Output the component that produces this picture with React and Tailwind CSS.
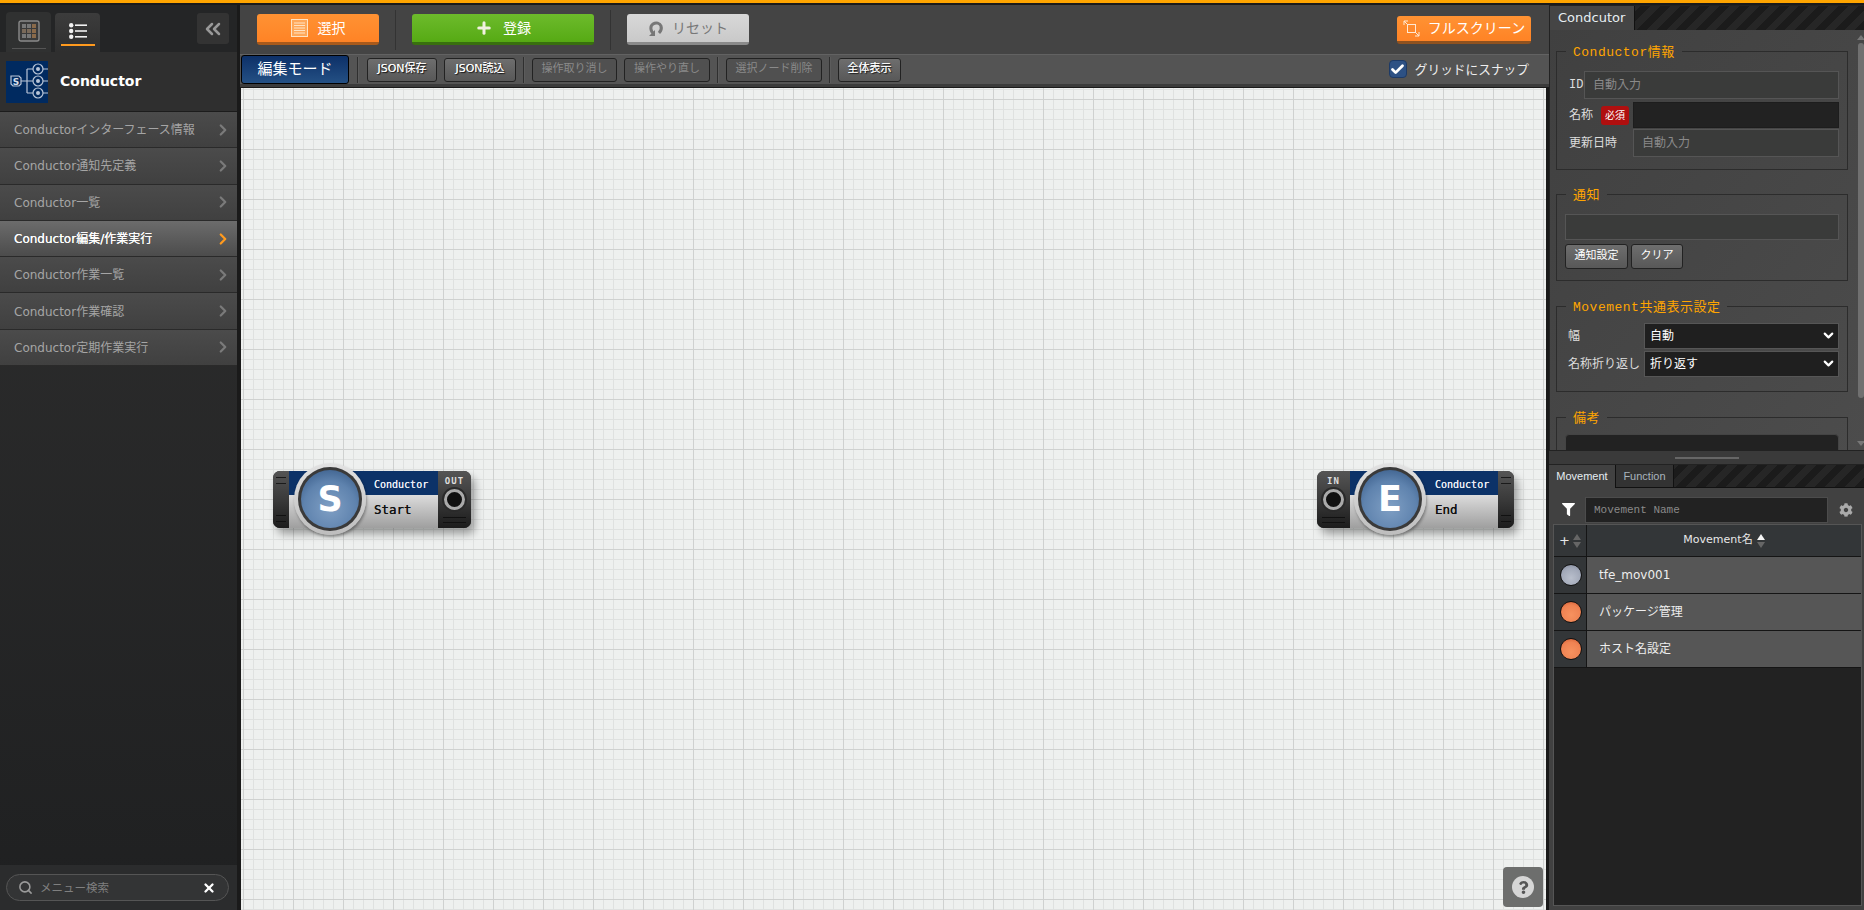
import React from 'react'
import { ChevronRight, ChevronDown, ChevronsLeft, Plus, Search, X, Check } from 'lucide-react'
import { FaCog, FaFilter, FaQuestion } from 'react-icons/fa'

const menuItems = [
  'Conductorインターフェース情報',
  'Conductor通知先定義',
  'Conductor一覧',
  'Conductor編集/作業実行',
  'Conductor作業一覧',
  'Conductor作業確認',
  'Conductor定期作業実行',
]

const movements = [
  { name: 'tfe_mov001', color: 'gray' },
  { name: 'パッケージ管理', color: 'orange' },
  { name: 'ホスト名設定', color: 'orange' },
]

const LogoIcon = () => (
  <svg width="42" height="42" viewBox="0 0 42 42" className="shrink-0">
    <rect width="42" height="42" fill="#002a60" />
    <g fill="none" stroke="#b9c6d8" strokeWidth="1.2">
      <path d="M5 15h8l2 2v6l-2 2H7l-2-2z" />
      <path d="M15 20h12M21 8v24M21 8h6M21 32h6M37 8h5M37 20h5M37 32h5" />
      <circle cx="32" cy="8" r="5" />
      <circle cx="32" cy="20" r="5" />
      <circle cx="32" cy="32" r="5" />
    </g>
    <circle cx="32" cy="8" r="2" fill="#b9c6d8" />
    <circle cx="32" cy="20" r="2" fill="#b9c6d8" />
    <circle cx="32" cy="32" r="2" fill="#b9c6d8" />
    <text x="10" y="23.5" textAnchor="middle" fontSize="9" fontWeight="700" fill="#d5dde8">S</text>
  </svg>
)

const GridTabIcon = () => (
  <svg width="22" height="22" viewBox="0 0 22 22">
    <rect x="1" y="1" width="20" height="20" rx="2" fill="#3a3a3a" stroke="#8a8a8a" strokeWidth="1.4" />
    {[4, 9, 14].map((y) =>
      [4, 9, 14].map((x) => (
        <rect key={`${x}-${y}`} x={x} y={y} width="4" height="4" fill={x === 14 ? '#8a6a4a' : y === 9 ? '#7a6a5a' : '#777'} />
      ))
    )}
  </svg>
)

const ListTabIcon = () => (
  <svg width="18" height="16" viewBox="0 0 18 16" fill="#f2f2f2">
    <circle cx="2.2" cy="2.2" r="2.2" />
    <circle cx="2.2" cy="8" r="2.2" />
    <circle cx="2.2" cy="13.8" r="2.2" />
    <rect x="6" y="1.4" width="12" height="1.6" />
    <rect x="6" y="7.2" width="12" height="1.6" />
    <rect x="6" y="13" width="12" height="1.6" />
  </svg>
)

const SelectIcon = () => (
  <svg width="17" height="18" viewBox="0 0 17 18" fill="none" stroke="#ffe3c4" strokeWidth="1">
    <rect x="0.5" y="0.5" width="16" height="17" fill="#ffa85a" />
    <path d="M3 4h11M3 6.5h11M3 9h11M3 11.500h11M3 14h11" />
  </svg>
)

const ResetIcon = () => (
  <svg width="16" height="16" viewBox="0 0 16 16" fill="none" stroke="#777" strokeWidth="3">
    <path d="M6 14C2 11 2 6 5 4c3-2 7-1 8 2 1 3 0 5-2 7" />
    <path d="M7 10v6H1z" fill="#777" stroke="none" />
  </svg>
)

const FullscreenIcon = () => (
  <svg width="17" height="17" viewBox="0 0 17 17" fill="none" stroke="#ffe8d2" strokeWidth="1">
    <rect x="4.500" y="4.500" width="8" height="8" />
    <path d="M1 5V1h4M1 1l3 3M16 12v4h-4M16 16l-3-3" />
  </svg>
)

const SortArrows = ({ active }) => (
  <svg width="8" height="14" viewBox="0 0 8 14" className="shrink-0">
    <path d="M4 0l4 6H0z" fill={active ? '#f5f5f5' : '#666'} />
    <path d="M4 14L0 8h8z" fill="#666" />
  </svg>
)

const Separator = ({ className = '' }) => (
  <div className={`w-px h-[26px] bg-[#2f2f2f] border-r border-[#5c5c5c] box-content shrink-0 ${className}`} />
)

const BigButton = ({ className, children }) => (
  <button className={`flex items-center justify-center gap-2 rounded-[3px] text-[14px] shrink-0 ${className}`}>
    {children}
  </button>
)

const ToolButton = ({ width, disabled, children }) => (
  <button
    style={{ width }}
    className={`h-[24px] shrink-0 rounded-[3px] text-[11px] border border-[#222] flex items-center justify-center ${
      disabled
        ? 'text-[#8a8a8a] bg-[#505050] border-[#3a3a3a]'
        : 'text-white bg-gradient-to-b from-[#6e6e6e] to-[#585858] [text-shadow:1px_1px_1px_#111,0_0_0.5px_#fff]'
    }`}
  >
    {children}
  </button>
)

// fieldset padding also moves the legend, so the left margin stays small
const Field = ({ title, children, className }) => (
  <fieldset className={`border border-[#2c2c2c] ${className}`}>
    <legend className="ml-[1px] px-[7px] h-[20px] whitespace-nowrap leading-[23px] text-[13px] text-[#ffa500] tracking-[0.5px] [font-family:'Liberation_Mono','Noto_Sans_CJK_JP',monospace]">
      {title}
    </legend>
    {children}
  </fieldset>
)

const TextField = ({ className, placeholder }) => (
  <input
    readOnly
    placeholder={placeholder}
    className={`h-[28px] min-w-0 px-[8px] text-[12px] bg-[#3a3b3a] border border-[#555] placeholder:text-[#8a8a8a] outline-none ${className}`}
  />
)

const SelectField = ({ value }) => (
  <div className="relative w-[195px] h-[26px] shrink-0">
    <select
      defaultValue={value}
      className="appearance-none w-full h-full px-[5px] text-[12px] text-white bg-[#1f1f1f] border border-[#565656] outline-none"
    >
      <option>{value}</option>
    </select>
    <ChevronDown className="absolute right-[3px] top-[5px] text-white" size={15} strokeWidth={3.5} />
  </div>
)

const Node = ({ type, letter, label, port, style }) => {
  const isStart = type === 'start'
  const grip = (
    <div className="w-[16px] shrink-0 h-full bg-gradient-to-b from-[#555] via-[#3a3a3a] to-[#1c1c1c] flex flex-col justify-between px-[3px] py-[6px]">
      <div className="flex flex-col gap-[5px]">
        <div className="h-px bg-[#1a1a1a]" />
        <div className="h-px bg-[#1a1a1a]" />
      </div>
      <div className="flex flex-col gap-[5px]">
        <div className="h-px bg-[#111]" />
        <div className="h-px bg-[#111]" />
      </div>
    </div>
  )
  const connector = (
    <div className="w-[33px] shrink-0 h-full bg-gradient-to-b from-[#555] via-[#3a3a3a] to-[#1c1c1c] flex flex-col items-center pt-[3px]">
      <div className="h-[14px] leading-[14px] text-[9px] font-bold tracking-[1px] text-[#ddd] [font-family:'DejaVu_Sans_Mono',monospace]">
        {port}
      </div>
      <div className="w-[21px] h-[21px] mt-[1px] rounded-full bg-[#111] border-[3px] border-[#aaa] shadow-[0_0_0_2px_#2a2a2a]" />
      <div className="mt-auto mb-[5px] w-[23px] flex flex-col gap-[4px]">
        <div className="h-px bg-[#111]" />
        <div className="h-px bg-[#111]" />
      </div>
    </div>
  )
  return (
    <div
      style={style}
      className="absolute h-[57px] flex rounded-[7px] overflow-visible shadow-[4px_6px_8px_rgba(0,0,0,0.35)] bg-[#222] [font-family:'DejaVu_Sans_Mono',monospace]"
    >
      <div className="flex w-full h-full overflow-hidden rounded-[7px]">
        {isStart ? grip : connector}
        <div className="flex-1 flex flex-col">
          <div className="h-[24px] pl-[85px] bg-[#0c3268] text-[10px] leading-[27px] text-[#e6edf5] shrink-0 [text-shadow:0_0_0.5px_#fff]">Conductor</div>
          <div className="flex-1 pl-[85px] bg-gradient-to-b from-[#dcdcdc] to-[#9f9f9f] text-[12.5px] leading-[30px] text-[#111] [text-shadow:0_0_0.5px_#111]">
            {label}
          </div>
        </div>
        {isStart ? connector : grip}
      </div>
      <div
        className={`absolute top-[-8px] w-[72px] h-[72px] rounded-full bg-gradient-to-b from-[#e2e2e2] to-[#bdbdbd] p-[4px] shadow-[1px_2px_3px_rgba(0,0,0,0.35)] ${
          isStart ? 'left-[21px]' : 'left-[37px]'
        }`}
      >
        <div className="w-full h-full rounded-full bg-[#3a3a3a] p-[3px]">
          <div className="w-full h-full rounded-full bg-[radial-gradient(circle_at_50%_65%,#7f9fc4_0%,#5f83ae_55%,#2f527f_100%)] flex items-center justify-center text-white text-[35px] font-bold leading-none [font-family:'DejaVu_Sans',sans-serif]">
            {letter}
          </div>
        </div>
      </div>
    </div>
  )
}

const Sidebar = () => (
  <aside className="w-[237px] shrink-0 flex flex-col bg-gradient-to-b from-[#303030] to-[#1f2021]">
    <div className="h-[47px] shrink-0 flex items-end pl-[6px] pr-[8px] bg-[#242526]">
      <div className="w-[45px] h-[40px] rounded-t-[4px] bg-[#303131] flex flex-col items-center pt-[8px]">
        <GridTabIcon />
        <div className="w-[34px] h-px bg-[#555] mt-[6px]" />
      </div>
      <div className="ml-[4px] w-[45px] h-[39px] rounded-t-[4px] bg-gradient-to-b from-[#3c3c3c] to-[#2f2f2f] flex flex-col items-center pt-[10px]">
        <ListTabIcon />
        <div className="w-[34px] h-[2px] bg-[#ff9a1e] mt-[5px]" />
      </div>
      <button className="ml-auto mb-[8px] w-[32px] h-[31px] rounded-[3px] bg-[#333] flex items-center justify-center text-[#999]">
        <ChevronsLeft size={24} strokeWidth={2.5} />
      </button>
    </div>
    <div className="h-[59px] shrink-0 flex items-center gap-[12px] pl-[6px] bg-[#2f2f2f]">
      <LogoIcon />
      <div className="text-[14px] font-bold text-white">Conductor</div>
    </div>
    <nav className="flex flex-col border-t border-[#1c1c1c]">
      {menuItems.map((item, i) => (
        <div
          key={item}
          className={`h-[36.3px] flex items-center justify-between pl-[14px] pr-[5px] border-b border-[#2a2a2a] text-[12px] ${
            i === 3
              ? 'bg-gradient-to-b from-[#6c6c6c] to-[#4c4c4c] text-white [text-shadow:0_0_0.6px_#fff]'
              : 'bg-gradient-to-b from-[#4b4b4b] to-[#404040] text-[#a5a5a5]'
          }`}
        >
          <span className="pt-px">{item}</span>
          <ChevronRight size={18} strokeWidth={3} className={i === 3 ? 'text-[#ff9a1e]' : 'text-[#7a7a7a]'} />
        </div>
      ))}
    </nav>
    <div className="mt-auto h-[45px] shrink-0 bg-[#2b2c2d] flex items-center px-[6px]">
      <div className="w-[223px] h-[27px] rounded-full border border-[#555] bg-[#333435] flex items-center pl-[11px] pr-[12px]">
        <Search size={15} strokeWidth={2.5} className="text-[#9a9a9a] shrink-0" />
        <span className="ml-[7px] pt-[2px] text-[11.5px] text-[#7f7f7f]">メニュー検索</span>
        <X size={14} strokeWidth={4} className="ml-auto text-white" />
      </div>
    </div>
  </aside>
)

const Canvas = () => (
  <div className="relative mt-[1px] flex-1 ml-[1px] mr-[3px] overflow-hidden bg-[#eef0ef] bg-[linear-gradient(#cfd1d0_1px,transparent_1px),linear-gradient(90deg,#cfd1d0_1px,transparent_1px),linear-gradient(#dfe1e0_1px,transparent_1px),linear-gradient(90deg,#dfe1e0_1px,transparent_1px)] bg-[size:50px_50px,50px_50px,10px_10px,10px_10px] bg-[position:0_11px,2px_0,0_1px,2px_0]">
    <Node type="start" letter="S" label="Start" port="OUT" style={{ left: 32, top: 383, width: 198 }} />
    <Node type="end" letter="E" label="End" port="IN" style={{ left: 1076, top: 383, width: 197 }} />
    <div className="absolute right-[3px] bottom-[3px] w-[40px] h-[40px] rounded-[4px] bg-[#6d6e6d] flex items-center justify-center">
      <div className="w-[22px] h-[22px] rounded-full bg-[#d6d6d6] flex items-center justify-center text-[#555]">
        <FaQuestion size={13} />
      </div>
    </div>
  </div>
)

const Main = () => (
  <main className="flex-1 min-w-0 ml-[3px] flex flex-col">
    <div className="h-[49px] shrink-0 bg-[#444] flex items-center pl-[17px] pr-[18px]">
      <BigButton className="w-[122px] h-[31px] text-white bg-gradient-to-b from-[#ff9233] to-[#ff8325] border-b-[3px] border-[#a85a1c]">
        <SelectIcon />
        <span className="ml-[2px]">選択</span>
      </BigButton>
      <div className="mx-[16px] w-px h-[40px] bg-[#333] shrink-0" />
      <BigButton className="w-[182px] h-[31px] text-white bg-gradient-to-b from-[#6dbb2b] to-[#56aa13] border-b-[3px] border-[#39700f]">
        <Plus size={18} strokeWidth={4} className="text-[#f1f1e0]" />
        <span className="ml-[2px]">登録</span>
      </BigButton>
      <div className="mx-[16px] w-px h-[40px] bg-[#333] shrink-0" />
      <BigButton className="w-[122px] h-[31px] text-[#777] bg-gradient-to-b from-[#d8d8d8] to-[#c9c9c9] border-b-[3px] border-[#8a8a8a]">
        <ResetIcon />
        <span>リセット</span>
      </BigButton>
      <BigButton className="ml-auto w-[134px] h-[28px] text-[12.5px] text-white bg-gradient-to-b from-[#ff9233] to-[#ff8325] border-b-[3px] border-[#8f5220]">
        <FullscreenIcon />
        <span>フルスクリーン</span>
      </BigButton>
    </div>
    <div className="h-[33px] shrink-0 bg-[#545454] border-t border-[#626262] border-b-[3px] border-b-[#3b3b3b] flex items-center pl-[1px] pr-[20px] gap-[7px]">
      <div className="w-[108px] h-[29px] shrink-0 rounded-[3px] border border-black bg-gradient-to-b from-[#0d3068] to-[#245084] text-white text-[15px] flex items-center justify-center">
        編集モード
      </div>
      <Separator className="ml-[1px] mr-[1px]" />
      <ToolButton width={70}>JSON保存</ToolButton>
      <ToolButton width={72}>JSON読込</ToolButton>
      <Separator />
      <ToolButton width={85} disabled>操作取り消し</ToolButton>
      <ToolButton width={86} disabled>操作やり直し</ToolButton>
      <Separator />
      <ToolButton width={96} disabled>選択ノード削除</ToolButton>
      <Separator />
      <ToolButton width={63}>全体表示</ToolButton>
      <div className="ml-auto flex items-center gap-[8px]">
        <div className="w-[18px] h-[18px] rounded-[4px] bg-[#2d5184] border border-[#1d3a66] flex items-center justify-center">
          <Check size={15} strokeWidth={4.5} className="text-white" />
        </div>
        <span className="text-[12.7px] text-[#eee]">グリッドにスナップ</span>
      </div>
    </div>
    <Canvas />
  </main>
)

const InfoPanel = () => (
  <div className="h-[445px] shrink-0 flex flex-col border-l border-t border-[#222]">
    <div className="h-[24px] shrink-0 flex bg-[repeating-linear-gradient(-45deg,#1b1b1b_0,#1b1b1b_7px,#262626_7px,#262626_14px)]">
      <div className="w-[85px] bg-[#454545] border-r border-[#111] text-[13px] leading-[24px] text-[#e6eef2] pl-[8px]">Condcutor</div>
    </div>
    <div className="h-[420px] flex bg-gradient-to-br from-[#404040] to-[#4c4c4c] overflow-hidden">
      <div className="w-[305px] shrink-0 pl-[6px] pr-[7px] text-[12px] text-[#ddd]">
        <Field title="Conductor情報" className="mt-[11px] px-[8px] pb-[12px] pt-[10px]">
          <div className="flex items-center gap-[5px] mb-[3px]">
            <span className="w-[10px] [font-family:'Liberation_Mono',monospace] text-[12px] ml-[4px]">ID</span>
            <TextField placeholder="自動入力" className="flex-1" />
          </div>
          <div className="flex items-center mb-[1px]">
            <span className="w-[32px] ml-[4px]">名称</span>
            <span className="w-[28px] h-[19px] rounded-[3px] bg-[#b00f0f] text-white text-[10px] leading-[19px] text-center">必須</span>
            <input readOnly className="ml-[4px] flex-1 min-w-0 h-[26px] bg-[#222] border border-[#1d1d1d] outline-none" />
          </div>
          <div className="flex items-center">
            <span className="w-[64px] ml-[4px]">更新日時</span>
            <TextField placeholder="自動入力" className="flex-1" />
          </div>
        </Field>
        <Field title="通知" className="mt-[14px] px-[8px] pb-[11px] pt-[10px]">
          <input readOnly className="block w-full h-[26px] bg-[#3a3b3a] border border-[#555] outline-none" />
          <div className="flex gap-[3px] mt-[4px]">
            <button className="w-[63px] h-[25px] rounded-[3px] border border-[#222] bg-gradient-to-b from-[#6e6e6e] to-[#585858] text-[11px] text-white">通知設定</button>
            <button className="w-[52px] h-[25px] rounded-[3px] border border-[#222] bg-gradient-to-b from-[#6e6e6e] to-[#585858] text-[11px] text-white">クリア</button>
          </div>
        </Field>
        <Field title="Movement共通表示設定" className="mt-[15px] px-[8px] pb-[14px] pt-[7px]">
          <div className="flex items-center justify-between ml-[3px] mb-[2px]">
            <span>幅</span>
            <SelectField value="自動" />
          </div>
          <div className="flex items-center justify-between ml-[3px]">
            <span>名称折り返し</span>
            <SelectField value="折り返す" />
          </div>
        </Field>
        <Field title="備考" className="mt-[15px] px-[8px] pt-[7px]">
          <div className="h-[60px] rounded-t-[4px] bg-[#222] border border-[#444]" />
        </Field>
      </div>
      <div className="ml-[3px] w-[6px] flex flex-col items-center text-[#777]">
        <div className="w-0 h-0 mt-[5px] border-x-[4px] border-x-transparent border-b-[5px] border-b-[#777]" />
        <div className="w-[6px] h-[355px] mt-[3px] rounded-[3px] bg-[#707070]" />
        <div className="w-0 h-0 mt-auto mb-[4px] border-x-[4px] border-x-transparent border-t-[5px] border-t-[#777]" />
      </div>
    </div>
  </div>
)

const MovementList = () => (
  <div className="flex-1 min-h-0 flex flex-col bg-[#414141]">
    <div className="h-[23px] shrink-0 flex border-b border-[#111] bg-[repeating-linear-gradient(-45deg,#1b1b1b_0,#1b1b1b_7px,#262626_7px,#262626_14px)] text-[11px] [font-family:'Liberation_Sans',sans-serif]">
      <div className="w-[67px] -mb-px bg-[#414141] border-r border-[#111] text-[#e6eef2] leading-[23px] text-center">Movement</div>
      <div className="w-[58px] bg-[#333] border-r border-[#111] text-[#a9b4bd] leading-[23px] text-center">Function</div>
    </div>
    <div className="h-[36px] shrink-0 flex items-center pt-[7px] pl-[13px] pr-[8px]">
      <FaFilter size={13} className="text-white" />
      <input
        readOnly
        placeholder="Movement Name"
        className="ml-[10px] w-[243px] h-[26px] px-[8px] text-[11px] bg-[#222] border border-[#4c4c4c] placeholder:text-[#8a8a8a] outline-none [font-family:'Liberation_Mono',monospace]"
      />
      <FaCog size={14} className="ml-auto mr-[3px] text-[#aaa]" />
    </div>
    <div className="flex-1 min-h-0 ml-[4px] mb-[4px] mr-[2px] border border-[#555] bg-[#222] flex flex-col text-[12px]">
      <div className="h-[32px] shrink-0 flex bg-[#333638] border-b border-[#151515] text-[#e8e8e8]">
        <div className="w-[33px] shrink-0 border-r border-[#151515] flex items-center justify-center gap-[3px]">
          <span className="text-[13px]">+</span>
          <SortArrows />
        </div>
        <div className="flex-1 flex items-center justify-center gap-[4px] text-[11px]">
          <span>Movement名</span>
          <SortArrows active />
        </div>
      </div>
      {movements.map((row) => (
        <div key={row.name} className="h-[37px] shrink-0 flex border-b border-[#151515] bg-[#565656]">
          <div className="w-[33px] shrink-0 bg-[#333638] border-r border-[#151515] flex items-center justify-center pl-[1px]">
            <div
              className={`w-[22px] h-[22px] rounded-full border border-[#111] ${
                row.color === 'gray'
                  ? 'bg-[radial-gradient(circle_at_50%_65%,#b9bfcc_0%,#a1a8b8_60%,#7c8395_100%)]'
                  : 'bg-[radial-gradient(circle_at_50%_65%,#f7925f_0%,#ee8252_60%,#c9532c_100%)]'
              }`}
            />
          </div>
          <div className="pl-[12px] leading-[36px] text-[#eee]">{row.name}</div>
        </div>
      ))}
    </div>
  </div>
)

const App = () => (
  <div className="w-[1864px] h-[910px] overflow-hidden bg-[#1a1a1a] flex flex-col [font-family:'DejaVu_Sans','Noto_Sans_CJK_JP',sans-serif]">
    <div className="h-[3px] shrink-0 bg-[#ffa500]" />
    <div className="flex-1 min-h-0 flex pt-[2px]">
      <Sidebar />
      <Main />
      <div className="w-[315px] shrink-0 flex flex-col">
        <InfoPanel />
        <div className="h-[15px] shrink-0 bg-[#3a3a3a] border-y border-[#222] flex items-center justify-center">
          <div className="w-[64px] h-[2px] bg-[#666]" />
        </div>
        <MovementList />
      </div>
    </div>
  </div>
)

export default App
